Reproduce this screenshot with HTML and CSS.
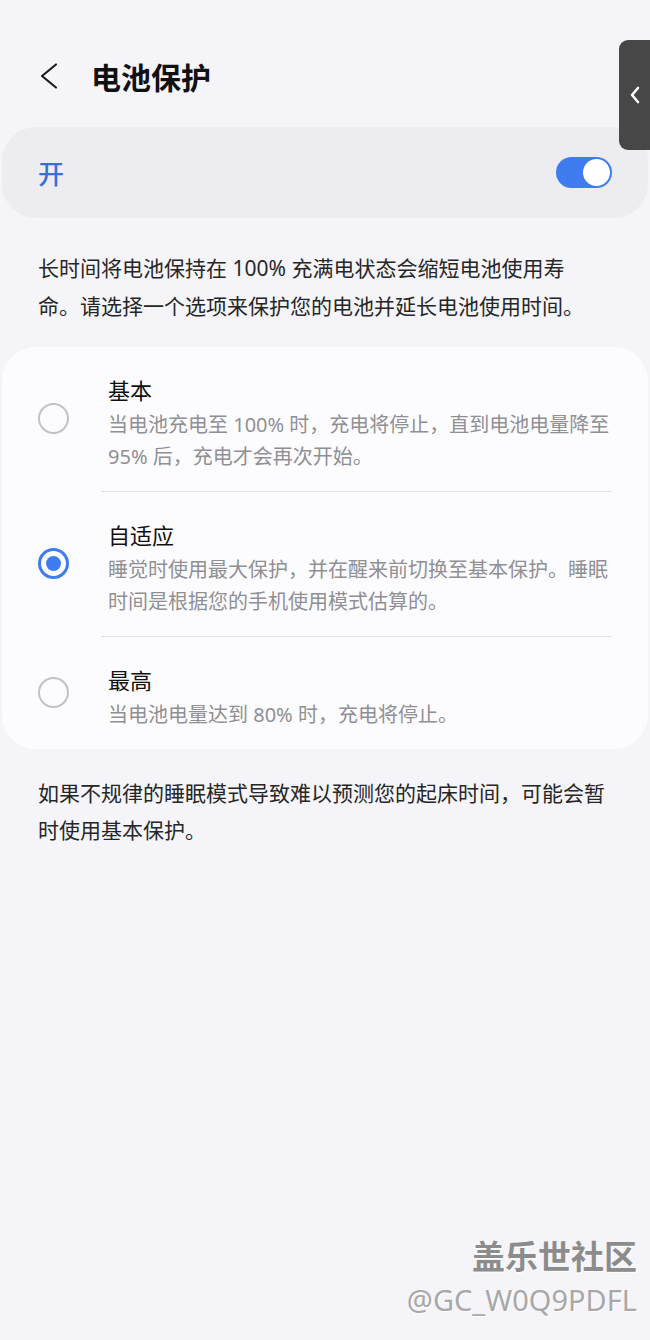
FILE: index.html
```html
<!DOCTYPE html>
<html lang="zh-CN">
<head>
	<meta charset="UTF-8">
	<meta name="viewport" content="width=device-width, initial-scale=1.0">
	<title>电池保护</title>
	<link rel="stylesheet" href="styles.css">
</head>
<body>

<div class="screen">
	<header class="topbar">
		<span class="back">
			<svg width="24" height="30" viewBox="0 0 24 30"><polyline points="18,3.5 4,15 18,26.5" fill="none" stroke="#1c1c1c" stroke-width="2.2" stroke-linecap="round" stroke-linejoin="round"/></svg>
		</span>
		<h1>电池保护</h1>
	</header>

	<div class="switch-card">
		<span class="switch-label">开</span>
		<span class="toggle"><span class="knob"></span></span>
	</div>

	<p class="note note-top">长时间将电池保持在 100% 充满电状态会缩短电池使用寿<br>命。请选择一个选项来保护您的电池并延长电池使用时间。</p>

	<div class="options">
		<div class="option">
			<span class="radio"></span>
			<div class="option-text">
				<div class="option-title">基本</div>
				<div class="option-desc">当电池充电至 100% 时，充电将停止，直到电池电量降至<br>95% 后，充电才会再次开始。</div>
			</div>
		</div>
		<div class="divider"></div>
		<div class="option">
			<span class="radio checked"></span>
			<div class="option-text">
				<div class="option-title">自适应</div>
				<div class="option-desc">睡觉时使用最大保护，并在醒来前切换至基本保护。睡眠时间是根据您的手机使用模式估算的。</div>
			</div>
		</div>
		<div class="divider"></div>
		<div class="option">
			<span class="radio"></span>
			<div class="option-text">
				<div class="option-title">最高</div>
				<div class="option-desc">当电池电量达到 80% 时，充电将停止。</div>
			</div>
		</div>
	</div>

	<p class="note note-bottom">如果不规律的睡眠模式导致难以预测您的起床时间，可能会暂时使用基本保护。</p>
</div>

<!-- floating edge panel handle -->
<div class="side-handle">
	<svg width="12" height="18" viewBox="0 0 12 18"><polyline points="9,2 3,9 9,16" fill="none" stroke="#fff" stroke-width="2.6" stroke-linecap="round" stroke-linejoin="round"/></svg>
</div>

<div class="watermark">
	<div class="wm-brand">盖乐世社区</div>
	<div class="wm-user">@GC_W0Q9PDFL</div>
</div>

</body>
</html>
```

FILE: styles.css
```css
html, body {
	margin: 0;
	padding: 0;
}
body {
	background-color: #f5f5f9;
	font-family: "Noto Sans", "Noto Sans CJK SC", sans-serif;
	color: #1c1c1c;
	width: 650px;
	height: 1340px;
	position: relative;
	overflow: hidden;
}
.screen {
	padding-top: 51px;
}
.topbar {
	display: flex;
	align-items: center;
	height: 50px;
	padding-left: 38px;
}
.back {
	display: flex;
	width: 24px;
	height: 30px;
}
.topbar h1 {
	margin: 0 0 0 29px;
	font-family: "Noto Sans CJK SC", sans-serif;
	font-size: 30px;
	font-weight: 700;
	color: #111;
	line-height: 40px;
}
.switch-card {
	margin: 26px 2px 0;
	height: 91px;
	border-radius: 34px;
	background-color: #ededf1;
	display: flex;
	align-items: center;
	justify-content: space-between;
	padding: 0 36px;
}
.switch-label {
	font-family: "Noto Sans CJK SC", sans-serif;
	font-size: 26px;
	font-weight: 500;
	color: #3b6fd3;
}
.toggle {
	width: 56px;
	height: 31px;
	border-radius: 16px;
	background-color: #3f7cf0;
	display: flex;
	align-items: center;
	justify-content: flex-end;
	padding: 0 2px;
	box-sizing: border-box;
}
.knob {
	width: 27px;
	height: 27px;
	border-radius: 50%;
	background-color: #fff;
}
.note {
	margin: 0;
	padding: 0 38px;
	font-size: 21px;
	color: #262626;
}
.note-top {
	margin-top: 31px;
	line-height: 38px;
}
.note-bottom {
	margin-top: 26px;
	line-height: 37px;
}
.options {
	margin: 22px 2px 0;
	background-color: #fcfcfe;
	border-radius: 34px;
}
.option {
	display: flex;
	align-items: center;
	padding: 27px 36px 18px 36px;
}
.radio {
	flex: none;
	width: 31px;
	height: 31px;
	border-radius: 50%;
	border: 2px solid #c2c2c6;
	box-sizing: border-box;
	margin-bottom: 11px;
	margin-right: 39px;
	display: flex;
	align-items: center;
	justify-content: center;
}
.radio.checked {
	border: 3px solid #3f7cf0;
}
.radio.checked::after {
	content: "";
	width: 15px;
	height: 15px;
	border-radius: 50%;
	background-color: #3f7cf0;
}
.option-text {
	flex: 1;
}
.option-title {
	font-size: 22px;
	line-height: 32px;
	color: #111;
}
.option-desc {
	margin-top: 3px;
	font-size: 20px;
	line-height: 32px;
	color: #8f8f94;
}
.divider {
	height: 1px;
	background-color: #e1e1e5;
	margin: 0 36px 0 99px;
}
.side-handle {
	position: absolute;
	top: 40px;
	right: 0;
	width: 31px;
	height: 110px;
	background-color: #474747;
	border-radius: 9px 0 0 9px;
	display: flex;
	align-items: center;
	justify-content: center;
}
.watermark {
	position: absolute;
	right: 13px;
	top: 1232px;
	text-align: right;
	font-family: "Noto Sans CJK SC", sans-serif;
}
.wm-brand {
	font-size: 33px;
	font-weight: 700;
	line-height: 46px;
	color: #8c8c8c;
	text-shadow: 1px 1px 0 #fff;
}
.wm-user {
	font-family: "Noto Sans", sans-serif;
	font-size: 29px;
	line-height: 44px;
	color: #a8a8a8;
	text-shadow: 1px 1px 0 #fff;
}
```
